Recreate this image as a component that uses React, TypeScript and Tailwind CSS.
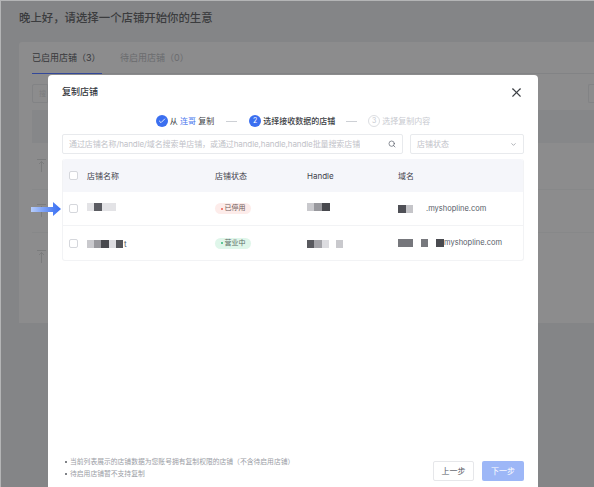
import { Search, X, ChevronDown, Check } from "lucide-react";

const font = "font-['Inter','Noto_Sans_CJK_SC',sans-serif]";

function Blur({ w, c }: { w: number; c: string }) {
  return <span className="block h-[8px] shrink-0" style={{ width: w, backgroundColor: c }} />;
}

function Box() {
  return <span className="block w-[9px] h-[9px] rounded-[2px] border border-[#d5d7dc] bg-white shrink-0" />;
}

function SortMark() {
  return (
    <svg width="9" height="14" viewBox="0 0 9 14" fill="none" stroke="#777879" strokeWidth="0.8">
      <path d="M0 .5h9M4.5 13V2.5M2 5l2.5-2.5L7 5" />
    </svg>
  );
}

function Row({ name, status, handle, domain, last, up }: { name: React.ReactNode; status: React.ReactNode; handle: React.ReactNode; domain: React.ReactNode; last?: boolean; up?: boolean }) {
  const shift = up ? "mb-[3px]" : "mt-[1px]";
  return (
    <div className={`flex items-center h-[34px] ${last ? "" : "border-b border-[#f2f3f5]"}`}>
      <div className="w-[24px] pl-[6px]"><Box /></div>
      <div className={`w-[128px] flex items-center ${shift}`}>{name}</div>
      <div className="w-[92px] flex items-center">{status}</div>
      <div className={`w-[91px] flex items-center ${shift}`}>{handle}</div>
      <div className="flex items-center text-[7.5px] text-[#555a66]">{domain}</div>
    </div>
  );
}

export default function App() {
  return (
    <div className={`${font} relative w-[594px] h-[487px] overflow-hidden bg-[#b4b5b6]`}>
      <div className="ml-[1px] mt-[1px] h-[486px] bg-[#848587] pl-[18px]">
        <div className="pt-[9px] text-[11.4px] leading-[16px] font-medium text-[#3b3c3e]">晚上好，请选择一个店铺开始你的生意</div>
        <div className="mt-[16px] h-[281px] rounded-tl-[3px] bg-[#8c8c8d] pl-[13px]">
          <div className="flex gap-[18px] h-[32px] border-b border-[#828385]">
            <div className="h-[32px] w-[70px] border-b border-[#33489a] pt-[10px] text-[9px] leading-[12px] text-[#36373a] whitespace-nowrap">已启用店铺（3）</div>
            <div className="pt-[10px] text-[9px] leading-[12px] text-[#6a6b6e]">待启用店铺（0）</div>
          </div>
          <div className="mt-[10px] h-[19px] flex justify-between">
            <div className="w-[16px] rounded-l-[2px] border border-[#828385] pl-[6px] text-[7px] leading-[17px] text-[#7b7c7e]">搜</div>
            <div className="w-[6px] rounded-l-[2px] border border-r-0 border-[#828385]" />
          </div>
          <div className="mt-[7px] h-[33px] bg-[#868789]" />
          <div className="h-[47px] border-b border-[#878889] flex items-center pl-[5px]"><SortMark /></div>
          <div className="h-[43px] border-b border-[#878889] flex items-center pl-[5px]"><SortMark /></div>
          <div className="h-[48px] flex items-center pl-[5px]"><SortMark /></div>
        </div>
      </div>

      {/* modal */}
      <div className="absolute left-[48px] top-[75px] w-[490px] h-[412px] bg-white rounded-t-[4px] flex flex-col px-[14px]">
        <div className="flex items-center justify-between h-[34px] w-[462px]">
          <span className="text-[9px] font-medium text-[#33363c]">复制店铺</span>
          <X size={15} strokeWidth={1.8} className="text-[#3d4045]" />
        </div>
        <div className="mt-[2px] h-[20px] w-[462px] flex items-center justify-center text-[8px] text-[#3b3e44]">
          <span className="w-[12px] h-[12px] rounded-full bg-[#3b6ff0] flex items-center justify-center"><Check size={8} strokeWidth={2.5} className="text-white" /></span>
          <span className="ml-[2px]">从 <span className="text-[#4a78ee]">连哥</span> 复制</span>
          <span className="mx-[12px] w-[11px] h-px bg-[#cdd0d5]" />
          <span className="w-[12px] h-[12px] rounded-full bg-[#3b6ff0] flex items-center justify-center text-white text-[7px]">2</span>
          <span className="ml-[2px] font-medium">选择接收数据的店铺</span>
          <span className="mx-[11px] w-[11px] h-px bg-[#cdd0d5]" />
          <span className="w-[12px] h-[12px] rounded-full border border-[#dcdee2] flex items-center justify-center text-[#c8cad0] text-[7px]">3</span>
          <span className="ml-[2px] text-[#c8cad0]">选择复制内容</span>
        </div>
        <div className="mt-[3px] flex gap-[7px]">
          <div className="w-[341px] h-[20px] rounded-[2px] border border-[#e8eaed] flex items-center justify-between pl-[6px] pr-[6px]">
            <span className="text-[8px] tracking-[-0.1px] text-[#bfc2c8] whitespace-nowrap overflow-hidden">通过店铺名称/handle/域名搜索单店铺，或通过handle,handle,handle批量搜索店铺</span>
            <Search size={8} strokeWidth={2} className="text-[#555a66] shrink-0" />
          </div>
          <div className="w-[114px] h-[20px] rounded-[2px] border border-[#e8eaed] flex items-center justify-between pl-[6px] pr-[6px]">
            <span className="text-[8px] text-[#bfc2c8]">店铺状态</span>
            <ChevronDown size={7} strokeWidth={2} className="text-[#777b85]" />
          </div>
        </div>
        <div className="mt-[5px] w-[462px] rounded-[3px] border border-[#f2f3f5] border-t-0">
          <div className="flex items-center h-[33px] bg-[#f5f6fa] text-[8px] text-[#3f424a] rounded-t-[3px]">
            <div className="w-[24px] pl-[6px]"><Box /></div>
            <div className="w-[128px]">店铺名称</div>
            <div className="w-[92px]">店铺状态</div>
            <div className="w-[91px]">Handle</div>
            <div>域名</div>
          </div>
          <Row
            up
            name={<><Blur w={7} c="#e3e3e6" /><Blur w={8} c="#5b5c62" /><Blur w={14} c="#e3e3e6" /></>}
            status={<span className="flex items-center h-[11px] w-[36px] justify-center gap-[2px] rounded-full bg-[#fdecea] text-[7px] text-[#6d5c5c]"><i className="w-[2px] h-[2px] rounded-full bg-[#ef5a4c]" />已停用</span>}
            handle={<><Blur w={7} c="#c9c9cd" /><Blur w={8} c="#98989d" /><Blur w={8} c="#47484d" /></>}
            domain={<><Blur w={8} c="#4f5056" /><Blur w={7} c="#c5c5c9" /><span className="ml-[13px]">.myshopline.com</span></>}
          />
          <Row
            last
            name={<><Blur w={7} c="#c9c9cd" /><Blur w={7} c="#98989d" /><Blur w={8} c="#47484d" /><Blur w={7} c="#dcdce0" /><Blur w={7} c="#55565b" /><span className="text-[8px] leading-[8px] text-[#555a66] ml-[1px]">t</span></>}
            status={<span className="flex items-center h-[11px] w-[36px] justify-center gap-[2px] rounded-full bg-[#dff6ea] text-[7px] text-[#5c6d64]"><i className="w-[2px] h-[2px] rounded-full bg-[#35b97a]" />营业中</span>}
            handle={<><Blur w={7} c="#58595e" /><Blur w={8} c="#a3a3a8" /><Blur w={7} c="#dcdce0" /><span className="w-[7px]" /><Blur w={7} c="#c9c9cd" /></>}
            domain={<><Blur w={15} c="#76777c" /><span className="w-[8px]" /><Blur w={7} c="#77787d" /><span className="w-[8px]" /><Blur w={8} c="#4a4b50" /><span className="mb-[1px]">myshopline.com</span></>}
          />
        </div>
        <div className="mt-auto mb-[7px] w-[462px] flex items-end justify-between">
          <ul className="pl-[3px] text-[6.8px] leading-[12px] text-[#9a9da5]">
            <li className="flex items-center gap-[3px]"><i className="w-[2px] h-[2px] rounded-full bg-[#55585f]" />当前列表展示的店铺数据为您账号拥有复制权限的店铺（不含待启用店铺）</li>
            <li className="flex items-center gap-[3px]"><i className="w-[2px] h-[2px] rounded-full bg-[#55585f]" />待启用店铺暂不支持复制</li>
          </ul>
          <div className="flex gap-[8px] mb-[-1px]">
            <div className="w-[41px] h-[20px] rounded-[2px] border border-[#e6e7ea] flex items-center justify-center text-[8px] text-[#55585f]">上一步</div>
            <div className="w-[42px] h-[20px] rounded-[2px] bg-[#9db7f7] flex items-center justify-center text-[8px] text-white">下一步</div>
          </div>
        </div>
      </div>

      {/* arrow annotation */}
      <div className="absolute left-[31px] top-[202px]">
        <svg width="30" height="14" viewBox="0 0 30 14" className="block">
          <defs>
            <linearGradient id="a" x1="0" x2="1" y1="0" y2="0">
              <stop offset="0" stopColor="#b7cdfb" />
              <stop offset="0.75" stopColor="#4f80f5" />
              <stop offset="1" stopColor="#3a6ff2" />
            </linearGradient>
          </defs>
          <path d="M0 5h22V0l8 7-8 7V10H0z" fill="url(#a)" />
        </svg>
      </div>
    </div>
  );
}
